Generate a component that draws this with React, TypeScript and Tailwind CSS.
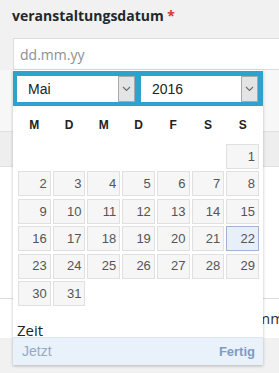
import React from 'react';

const weekDays = ['M', 'D', 'M', 'D', 'F', 'S', 'S'];

// Mai 2016 starts on a Sunday (7th column)
const days: (number | null)[] = [
  null, null, null, null, null, null, 1,
  ...Array.from({ length: 31 }, (_, i) => (i + 2 <= 31 ? i + 2 : null)).filter((d) => d !== null),
];

const Chevron = () => (
  <svg width="9" height="6" viewBox="0 0 9 6" fill="none">
    <path d="M1 1l3.5 3.5L8 1" stroke="#6b6b6b" strokeWidth="1.1" />
  </svg>
);

const FakeSelect = ({ value, width }: { value: string; width: string }) => (
  <div className={`flex h-[26px] ${width} items-stretch bg-white`}>
    <div className="flex flex-1 items-center pl-[11px] text-[14px] text-[#222]">{value}</div>
    <div className="flex w-[17px] items-center justify-center border border-[#a9a9a9] bg-[#e4e4e4]">
      <Chevron />
    </div>
  </div>
);

export default function App() {
  return (
    <div
      className="relative h-[373px] w-[279px] overflow-hidden bg-[#f1f1f1]"
      style={{ fontFamily: '"Open Sans", sans-serif' }}
    >
      {/* Label */}
      <div className="pl-[12px] pt-[6px] text-[14px] font-bold leading-[19px] text-[#23282d]">
        veranstaltungsdatum <span className="text-[#dc3232]">*</span>
      </div>

      {/* Input */}
      <div className="ml-[13px] mt-[13px] flex h-[32px] w-[300px] items-center border border-[#dddddd] bg-white pl-[6px] text-[14px] text-[#8c8f94]">
        dd.mm.yy
      </div>

      {/* Content under the popup */}
      <div className="flex flex-col">
        <div className="h-[61px] bg-[#f7f7f7]" />
        <div className="h-[36px] border-y border-[#e1e1e1] bg-[#eeeeee]" />
        <div className="h-[131px] bg-white" />
        <div className="flex h-[40px] items-center border-t border-[#dddddd] bg-white pl-[234px] text-[15px] text-[#333]">
          hh:mm
        </div>
      </div>

      {/* Datepicker popup */}
      <div
        className="absolute left-[13px] top-[70px] w-[250px] bg-white shadow-[0_1px_3px_rgba(0,0,0,0.25)]"
        style={{ fontFamily: '"Liberation Sans", Arial, sans-serif' }}
      >
        <div className="mt-[1px] flex h-[35px] items-start gap-[6px] bg-[#2ea2cc] pl-[4px] pt-[5px]">
          <FakeSelect value="Mai" width="w-[118px]" />
          <FakeSelect value="2016" width="w-[117px]" />
        </div>

        <div className="grid h-[38px] grid-cols-7 gap-x-[2px] px-[5px] pr-[4px]">
          {weekDays.map((d, i) => (
            <div key={i} className="flex items-center justify-center text-[12px] font-bold text-[#222]">
              {d}
            </div>
          ))}
        </div>

        <div className="grid grid-cols-7 gap-x-[2px] gap-y-[2.4px] pl-[5px] pr-[4px]">
          {days.map((d, i) =>
            d === null ? (
              <div key={i} className="h-[25px]" />
            ) : (
              <div
                key={i}
                className={`flex h-[25px] items-center justify-end border pr-[3px] text-[13px] text-[#555] ${
                  d === 22 ? 'border-[#9db5d2] bg-[#e7eff9]' : 'border-[#e0e0e0] bg-[#f6f6f6]'
                }`}
              >
                {d}
              </div>
            )
          )}
        </div>

        <div
          className="pl-[4px] pt-[17px] text-[15px] leading-[14px] text-[#222]"
          style={{ fontFamily: '"Open Sans", sans-serif' }}
        >
          Zeit
        </div>

        <div className="flex h-[28px] items-center justify-between border-t border-[#dde6f0] bg-[#e9f1fa] pl-[9px] pr-[8px]">
          <span className="text-[14px] text-[#93a9c7]">Jetzt</span>
          <span className="text-[13px] font-bold text-[#7f9bc2]">Fertig</span>
        </div>
      </div>
    </div>
  );
}
